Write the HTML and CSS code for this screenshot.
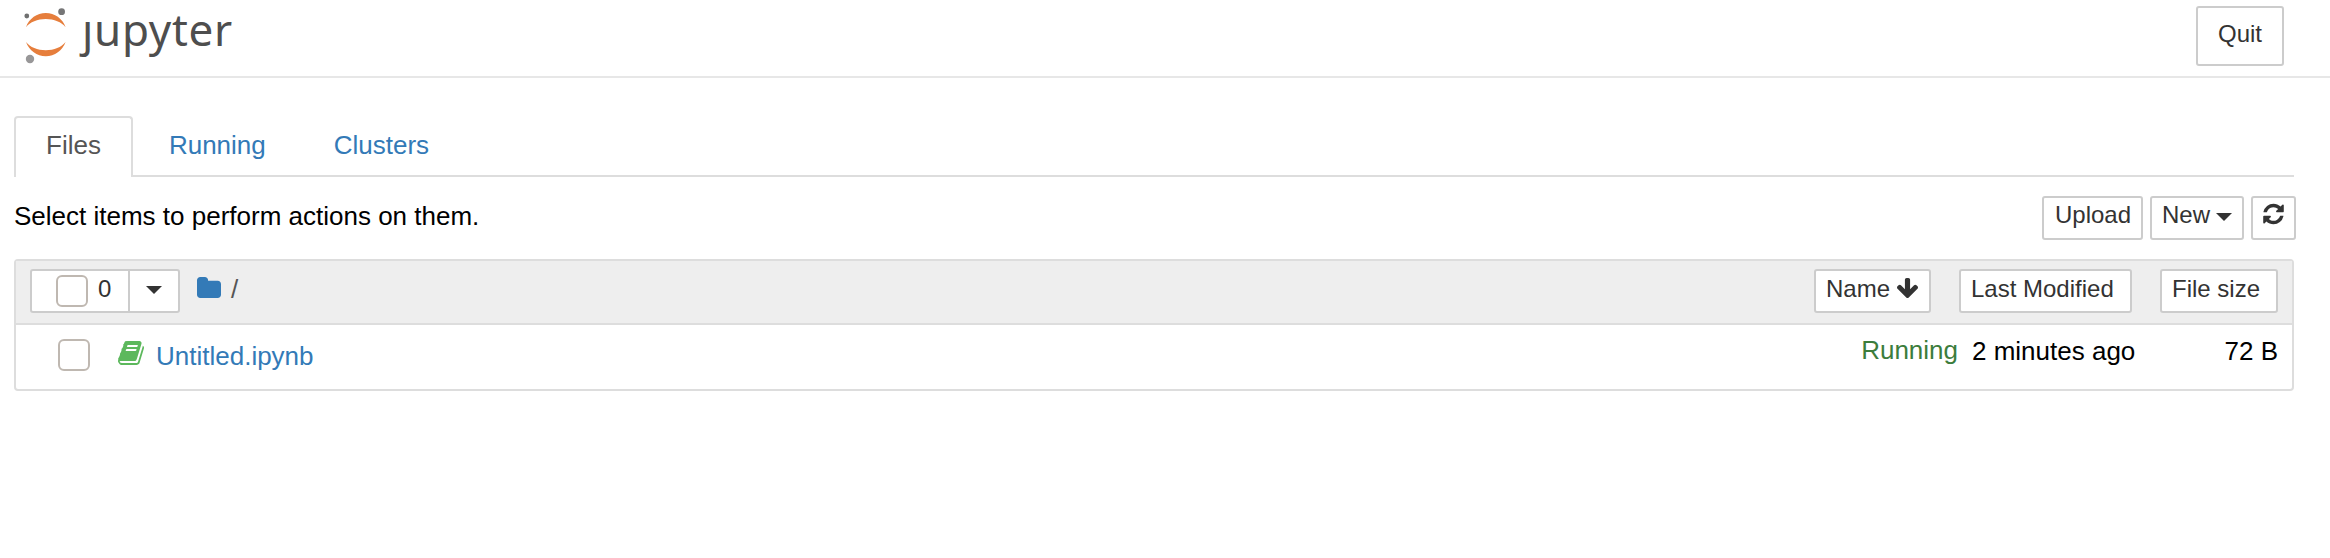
FILE: index.html
```html
<!DOCTYPE html>
<html lang="en">
<head>
<meta charset="utf-8">
<title>Home</title>
<link rel="stylesheet" href="styles.css">
</head>
<body>
<header class="header">
  <a class="brand">
    <svg class="brand-mark" width="44" height="64" viewBox="24 0 44 64">
      <path fill="#e67e3c" d="M26 27.2C29 18.500 37 13 45.800 13S62.600 18.500 65.600 27.200C61.500 22 54 19 45.800 19S30 22 26 27.200Z"/>
      <path fill="#e67e3c" d="M26 42C29 50.500 37 56.200 45.800 56.200S62.600 50.500 65.600 42C61.500 47.200 54 50.200 45.800 50.200S30 47.200 26 42Z"/>
      <circle cx="26.800" cy="16" r="2.400" fill="#6f7070"/>
      <circle cx="61.600" cy="11.700" r="3.400" fill="#767677"/>
      <circle cx="30" cy="59" r="4.200" fill="#989798"/>
    </svg>
    <span class="wordmark"><span class="wordmark-j">j</span>upyter</span>
  </a>
  <button class="btn btn-quit">Quit</button>
</header>
<main class="main">
  <nav class="tabs">
    <a class="tab tab-active">Files</a>
    <a class="tab">Running</a>
    <a class="tab">Clusters</a>
  </nav>
  <div class="toolbar">
    <span class="hint">Select items to perform actions on them.</span>
    <div class="actions">
      <button class="btn btn-upload">Upload</button>
      <button class="btn btn-new">New<i class="caret caret-new"></i></button>
      <button class="btn btn-refresh"><svg width="21" height="24" viewBox="0 0 1536 1792"><path transform="translate(-128)" fill="#333" d="M1639 1056q0 5-1 7-64 268-268 434.500t-478 166.500q-146 0-282.500-55t-243.500-157l-129 129q-19 19-45 19t-45-19-19-45v-448q0-26 19-45t45-19h448q26 0 45 19t19 45-19 45l-137 137q71 66 161 102t187 36q134 0 250-65t186-179q11-17 53-117 8-23 30-23h192q13 0 22.500 9.500t9.500 22.500zm25-800v448q0 26-19 45t-45 19h-448q-26 0-45-19t-19-45 19-45l138-138q-148-137-349-137-134 0-250 65t-186 179q-11 17-53 117-8 23-30 23h-199q-13 0-22.500-9.500t-9.500-22.500v-7q65-268 270-434.500t480-166.500q146 0 284 55.500t245 156.500l130-129q19-19 45-19t45 19 19 45z"/></svg></button>
    </div>
  </div>
  <section class="list">
    <div class="list-header">
      <div class="select-group">
        <button class="btn btn-select"><i class="checkbox"></i><span>0</span></button>
        <button class="btn btn-drop"><i class="caret"></i></button>
      </div>
      <div class="crumbs">
        <svg class="folder" width="24" height="21" viewBox="64 128 1664 1408" preserveAspectRatio="none"><path fill="#337ab7" d="M1728 608v704q0 92-66 158t-158 66h-1216q-92 0-158-66t-66-158v-960q0-92 66-158t158-66h320q92 0 158 66t66 158v32h672q92 0 158 66t66 158z"/></svg>
        <span class="slash">/</span>
      </div>
      <div class="sorters">
        <button class="btn btn-name">Name<svg class="arrow" width="21" height="20" viewBox="117 128 1558 1483"><path fill="#333" d="M1675 832q0 53-37 90l-651 652q-39 37-91 37-53 0-90-37l-651-652q-38-36-38-90 0-53 38-91l74-75q39-37 91-37 53 0 90 37l294 294v-704q0-52 38-90t90-38h128q52 0 90 38t38 90v704l294-294q37-37 90-37 52 0 91 37l75 75q37 39 37 91z"/></svg></button>
        <button class="btn btn-modified">Last Modified</button>
        <button class="btn btn-size">File size</button>
      </div>
    </div>
    <div class="row">
      <i class="checkbox"></i>
      <svg class="book" width="26" height="24" viewBox="64 128 1664 1536"><path fill="#5cb85c" d="M1703 478q40 57 18 129l-275 906q-19 64-76.500 107.500t-122.500 43.500h-923q-77 0-148.500-53.500t-99.500-131.500q-24-67-2-127 0-4 3-27t4-37q1-8-3-21.500t-3-19.500q2-11 8-21t16.500-23.500 16.500-23.500q23-38 45-91.500t30-91.500q3-10 .5-30t-.5-28q3-11 17-28t17-23q21-36 42-92t25-90q1-9-2.500-32t.5-28q4-13 22-30.500t22-22.500q19-26 42.500-84.500t27.500-96.500q1-8-3-25.500t-2-26.500q2-8 9-18t18-23 17-21q8-12 16.500-30.500t15-35 16-36 19.500-32 26.500-23.500 36-11.500 47.500 5.500l-1 3q38-9 51-9h761q74 0 114 56t18 130l-274 906q-36 119-71.500 153.500t-128.500 34.500h-869q-27 0-38 15-11 16-1 43 24 70 144 70h923q29 0 56-15.500t35-41.500l300-987q7-22 5-57 38 15 59 43zm-1064 2q-4 13 2 22.500t20 9.500h608q13 0 25.500-9.500t16.500-22.500l21-64q4-13-2-22.500t-20-9.500h-608q-13 0-25.500 9.500t-16.500 22.500zm-83 256q-4 13 2 22.500t20 9.500h608q13 0 25.500-9.500t16.500-22.500l21-64q4-13-2-22.500t-20-9.500h-608q-13 0-25.500 9.500t-16.500 22.500z"/></svg>
      <a class="file-name">Untitled.ipynb</a>
      <span class="status">Running</span>
      <span class="modified">2 minutes ago</span>
      <span class="size">72 B</span>
    </div>
  </section>
</main>
</body>
</html>
```

FILE: styles.css
```css
* { box-sizing: border-box; }
body {
  margin: 0;
  background: #fff;
  color: #000;
  font: 26px/36px "Liberation Sans", Arial, sans-serif;
}
svg { display: block; flex: none; }

.header {
  display: flex;
  justify-content: space-between;
  align-items: flex-start;
  height: 78px;
  padding: 0 46px 0 24px;
  border-bottom: 2px solid #e7e7e7;
}
.brand { display: flex; }
.wordmark {
  display: flex;
  margin: 0 0 0 14px;
  font: 44px/58px "Noto Sans", sans-serif;
  letter-spacing: 0.7px;
  color: #4e4e4e;
}
.wordmark-j { clip-path: inset(21px -10px -10px -10px); }

.btn {
  display: flex;
  flex: none;
  height: 44px;
  margin: 0;
  padding: 0 10px;
  border: 2px solid #ccc;
  border-radius: 3px;
  background: #fff;
  color: #333;
  font: 24px/34px "Liberation Sans", Arial, sans-serif;
  white-space: nowrap;
}
.btn-quit { height: 60px; margin-top: 6px; padding: 0 20px; line-height: 52px; }
.btn-upload { width: 101px; padding-left: 11px; }
.btn-new { width: 94px; }

.caret {
  flex: none;
  width: 16px;
  height: 8px;
  background: #333;
  clip-path: polygon(0 0, 100% 0, 50% 100%);
}
.caret-new { margin: 15px 0 0 6px; }

.main { padding: 38px 36px 0 14px; }
.tabs {
  display: flex;
  gap: 4px;
  height: 61px;
  box-shadow: inset 0 -2px #ddd;
}
.tab { padding: 0 32px; line-height: 58px; color: #337ab7; }
.tab-active {
  padding: 0 30px;
  border: 2px solid #ddd;
  border-bottom: 0;
  border-radius: 4px 4px 0 0;
  background: #fff;
  color: #555;
  line-height: 54px;
}

.toolbar {
  display: flex;
  justify-content: space-between;
  height: 82px;
  padding-top: 19px;
  margin-right: -2px;
}
.hint { line-height: 40px; }
.actions { display: flex; gap: 7px; }
.btn-refresh { width: 45px; }
.btn-refresh svg { margin-top: 4px; }

.list {
  height: 132px;
  border: 2px solid #ddd;
  border-radius: 4px;
}
.list-header {
  display: flex;
  height: 64px;
  padding: 8px 14px 0;
  border-bottom: 2px solid #ddd;
  background: #eee;
}
.list-header .btn { line-height: 36px; }
.select-group { display: flex; }
.select-group .btn-select { width: 100px; padding: 4px 0 0 24px; gap: 10px; border-radius: 3px 0 0 3px; line-height: 28px; }
.list-header .btn-select { line-height: 28px; }
.select-group .btn-drop { width: 52px; margin-left: -2px; padding: 15px 0 0 16px; border-radius: 0 3px 3px 0; }
.checkbox {
  flex: none;
  width: 32px;
  height: 32px;
  border: 2px solid #bfb8b1;
  border-radius: 6px;
  background: #fff;
}
.crumbs { display: flex; margin-left: 17px; color: #555; }
.folder { margin: 8px 10px 0 0; }
.slash { line-height: 40px; }
.sorters { display: flex; gap: 28px; margin-left: auto; }
.arrow { margin: 7px 0 0 7px; }
.btn-name { width: 117px; }
.btn-modified { width: 173px; }
.btn-size { width: 118px; }

.row {
  display: flex;
  height: 64px;
  padding: 14px 14px 0 42px;
}
.book { margin: 2px 0 0 28px; }
.file-name { margin-left: 12px; line-height: 35px; color: #337ab7; }
.status { margin-left: auto; line-height: 22px; color: #3c7d3c; }
.modified { margin-left: 14px; width: 185px; line-height: 24px; white-space: nowrap; }
.size { width: 121px; text-align: right; line-height: 24px; }
```
